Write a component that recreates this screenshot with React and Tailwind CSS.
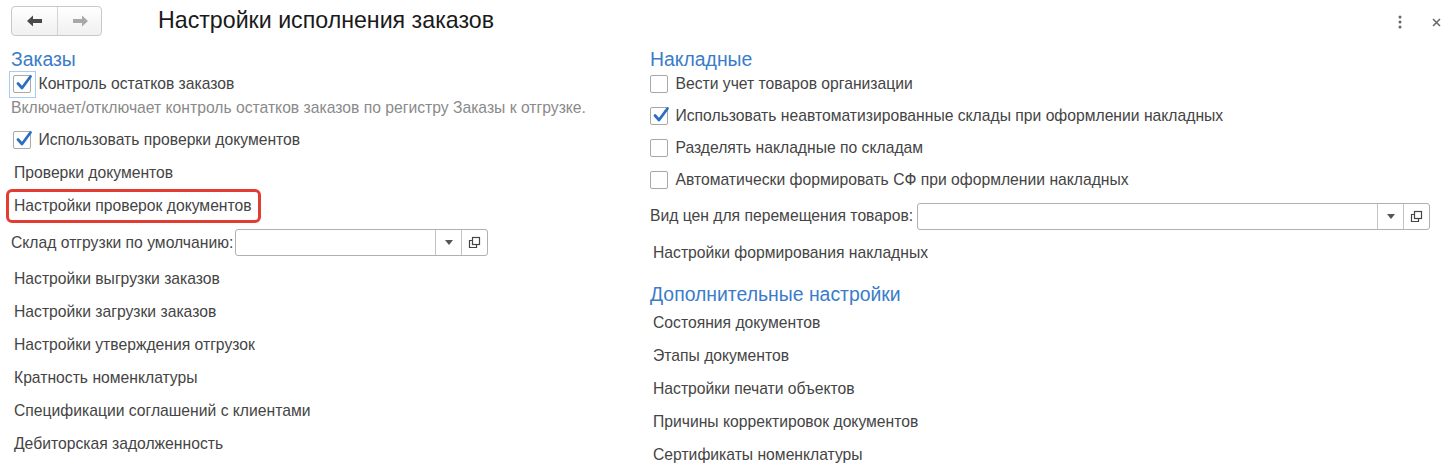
import React from "react";

const font = { fontFamily: '"Liberation Sans", Arial, sans-serif' };

function Check({ checked, focused }) {
  return (
    <span
      className={`flex h-[27px] w-[27px] shrink-0 items-center justify-center ${
        focused ? "border border-[#a9cdf0]" : "border border-transparent"
      }`}
    >
      <span className="relative flex h-[18px] w-[18px] items-center justify-center rounded-[2px] border border-[#a8a8a8] bg-white">
        {checked && (
          <svg width="18" height="18" viewBox="0 0 18 18" className="absolute -top-[2px] left-[1px]">
            <path d="M3 9.5 L7 14 L15.5 2.5" fill="none" stroke="#2b6fc4" strokeWidth="2.8" strokeLinecap="round" strokeLinejoin="round" />
          </svg>
        )}
      </span>
    </span>
  );
}

function CheckRow({ label, checked, focused, h = "h-[32px]", shift = "-ml-[4.5px]" }) {
  return (
    <div className={`flex ${h} items-center whitespace-nowrap ${shift}`}>
      <Check checked={checked} focused={focused} />
      <span className="ml-[3px] text-[15.7px] text-[#444]">{label}</span>
    </div>
  );
}

function Link({ children }) {
  return (
    <div className="flex h-[33px] items-center whitespace-nowrap pl-[3px] text-[15.7px] text-[#444]">{children}</div>
  );
}

function Field({ w }) {
  return (
    <div className={`flex h-[27px] ${w} rounded-[3px] border border-[#b0b0b0] bg-white`}>
      <div className="flex-1" />
      <div className="flex w-[26px] items-center justify-center border-l border-[#c4c4c4]">
        <svg width="8" height="5" viewBox="0 0 8 5">
          <path d="M0 0 H8 L4 5 Z" fill="#555" />
        </svg>
      </div>
      <div className="flex w-[26px] items-center justify-center border-l border-[#c4c4c4]">
        <svg width="13" height="13" viewBox="0 0 13 13" fill="none" stroke="#444" strokeWidth="1.2">
          <rect x="4.5" y="1.5" width="7" height="7" />
          <path d="M4.5 4.5 H1.5 V11.5 H8.5 V8.5" />
        </svg>
      </div>
    </div>
  );
}

function Heading({ children, className = "" }) {
  return <div className={`whitespace-nowrap text-[19.4px] leading-[22px] text-[#3a7cc9] ${className}`}>{children}</div>;
}

export default function App() {
  return (
    <div className="h-[471px] w-[1455px] overflow-hidden bg-white" style={font}>
      {/* header */}
      <div className="flex h-[46px] items-start pt-[6px]">
        <div className="ml-[11px] flex h-[30px] w-[91px] overflow-hidden rounded-[4px] border border-[#c8c8c8] bg-gradient-to-b from-white to-[#f0f0f0]">
          <div className="flex w-[46px] items-center justify-center border-r border-[#d4d4d4]">
            <svg width="16" height="12" viewBox="0 0 16 12">
              <path d="M0 6 L6 0.5 V4 H15 V8 H6 V11.5 Z" fill="#4a4a4a" />
            </svg>
          </div>
          <div className="flex flex-1 items-center justify-center">
            <svg width="16" height="12" viewBox="0 0 16 12">
              <path d="M16 6 L10 0.5 V4 H1 V8 H10 V11.5 Z" fill="#a8a8a8" />
            </svg>
          </div>
        </div>
        <div className="ml-[56px] -mt-[1px] whitespace-nowrap text-[23.2px] leading-[30px] text-[#1a1a1a]">
          Настройки исполнения заказов
        </div>
        <div className="flex-1" />
        <div className="mr-[14px] mt-[9px] flex items-center gap-[30px]">
          <svg width="4" height="14" viewBox="0 0 4 14">
            <circle cx="2" cy="2" r="1.5" fill="#666" />
            <circle cx="2" cy="7" r="1.5" fill="#666" />
            <circle cx="2" cy="12" r="1.5" fill="#666" />
          </svg>
          <svg width="9" height="9" viewBox="0 0 9 9">
            <path d="M1 1 L8 8 M8 1 L1 8" stroke="#666" strokeWidth="1.5" />
          </svg>
        </div>
      </div>

      <div className="flex">
        {/* left column */}
        <div className="ml-[11px] w-[639px] shrink-0">
          <Heading className="h-[26px] pt-[2px]">Заказы</Heading>
          <CheckRow label="Контроль остатков заказов" checked focused h="h-[24px]" shift="-ml-[2.5px]" />
          <div className="flex h-[24px] items-center whitespace-nowrap text-[15.7px] text-[#8a8a8a]">
            Включает/отключает контроль остатков заказов по регистру Заказы к отгрузке.
          </div>
          <div className="mt-[4px]">
            <CheckRow label="Использовать проверки документов" checked shift="-ml-[2.5px]" />
          </div>
          <Link>Проверки документов</Link>
          <div className="-ml-[5px] flex h-[34px] w-[255px] items-center whitespace-nowrap rounded-[6px] border-[3px] border-[#e23c33] pl-[5px] text-[15.7px] text-[#444]">
            Настройки проверок документов
          </div>
          <div className="flex h-[39px] items-center gap-[2px]">
            <span className="shrink-0 whitespace-nowrap text-[15.7px] text-[#444]">Склад отгрузки по умолчанию:</span>
            <Field w="w-[253px]" />
          </div>
          <Link>Настройки выгрузки заказов</Link>
          <Link>Настройки загрузки заказов</Link>
          <Link>Настройки утверждения отгрузок</Link>
          <Link>Кратность номенклатуры</Link>
          <Link>Спецификации соглашений с клиентами</Link>
          <Link>Дебиторская задолженность</Link>
        </div>

        {/* right column */}
        <div className="w-[780px] shrink-0">
          <Heading className="h-[22px] pt-[2px]">Накладные</Heading>
          <CheckRow label="Вести учет товаров организации" />
          <CheckRow label="Использовать неавтоматизированные склады при оформлении накладных" checked />
          <CheckRow label="Разделять накладные по складам" />
          <CheckRow label="Автоматически формировать СФ при оформлении накладных" />
          <div className="flex h-[40px] items-center gap-[4px]">
            <span className="shrink-0 whitespace-nowrap text-[15.7px] text-[#444]">Вид цен для перемещения товаров:</span>
            <Field w="flex-1" />
          </div>
          <Link>Настройки формирования накладных</Link>
          <div className="flex h-[37px] items-end pb-[1px]">
            <Heading>Дополнительные настройки</Heading>
          </div>
          <Link>Состояния документов</Link>
          <Link>Этапы документов</Link>
          <Link>Настройки печати объектов</Link>
          <Link>Причины корректировок документов</Link>
          <Link>Сертификаты номенклатуры</Link>
        </div>
      </div>
    </div>
  );
}
